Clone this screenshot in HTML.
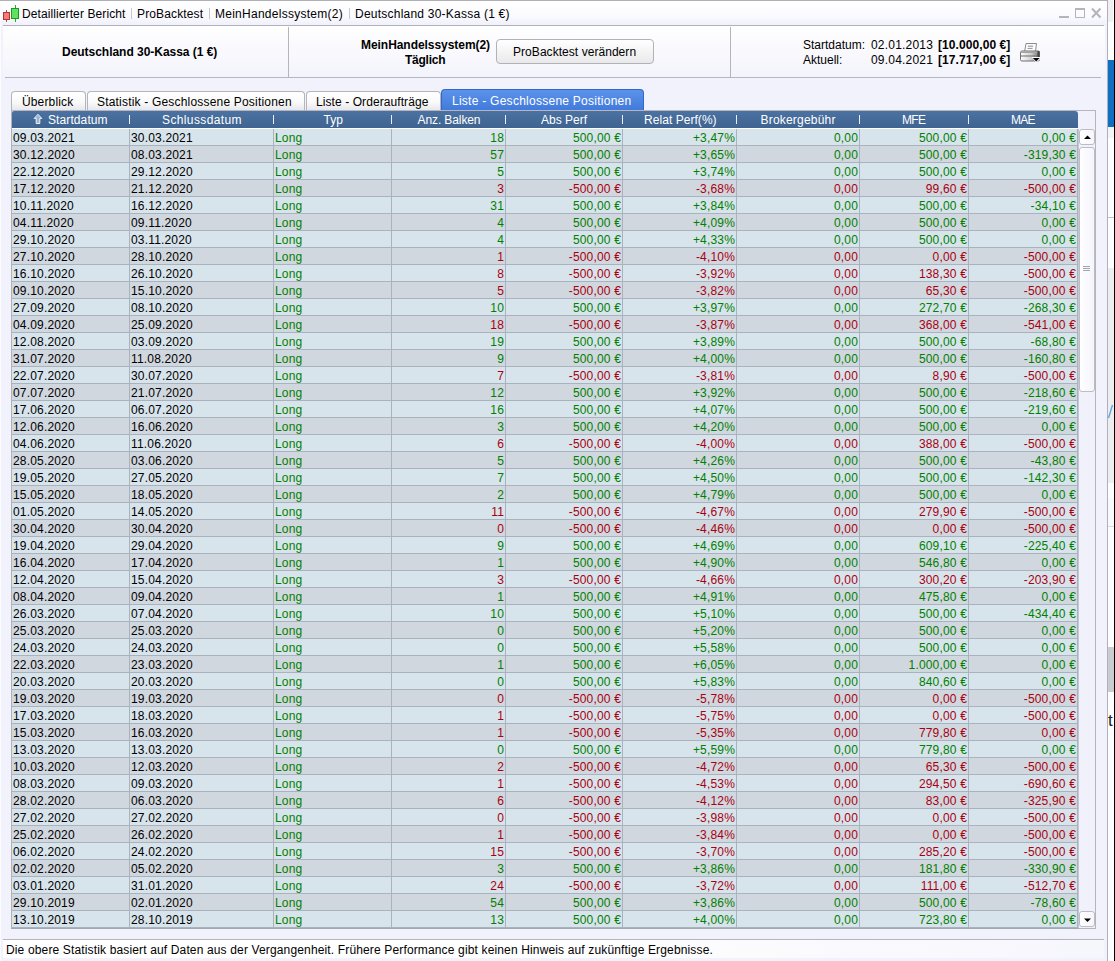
<!DOCTYPE html>
<html><head><meta charset="utf-8"><title>Detaillierter Bericht</title>
<style>
html,body{margin:0;padding:0}
body{width:1115px;height:961px;overflow:hidden;background:#fff;position:relative;font-family:"Liberation Sans",sans-serif;font-size:12px;color:#000}
div,span,i,b{position:absolute;white-space:nowrap;font-style:normal}
#win{left:0;top:0;width:1107px;height:961px;background:#f2f2fc}
#wtop{left:0;top:0;width:1108px;height:1px;background:#b0b0b8}
#wl{left:0;top:1px;width:1px;height:960px;background:#fcfcff}
#wr{left:1107px;top:0;width:1px;height:961px;background:#b0b0bc}
#tbar{left:1px;top:1px;width:1106px;height:24px;background:linear-gradient(#ffffff 0%,#fbfbff 60%,#f0f0fb 100%)}
#tline{left:3px;top:25px;width:1101px;height:1px;background:#b2b2ba}
#panel{left:3px;top:26px;width:1102px;height:51px;background:linear-gradient(#ffffff,#f3f3fc)}
#pline{left:5px;top:77px;width:1096px;height:1px;background:#b6b6be}
.vd{top:27px;width:1px;height:51px;background:#b4b4bc}
.t{font-size:12px;line-height:14px;height:14px}
.bd{font-weight:bold}
.sep{top:8px;width:1px;height:11px;background:#c8c8d0}
/* button */
#btn{left:496px;top:39px;width:156px;height:23px;border:1px solid #b2b2b6;border-radius:4px;background:linear-gradient(#ffffff,#f4f4f4 50%,#e9e9eb)}
/* tabs */
.tab{top:91px;height:19px;border:1px solid #b4b4bc;border-bottom:none;border-radius:4px 4px 0 0;background:linear-gradient(#ffffff,#fafafa 55%,#e8e8ec);box-sizing:border-box}
.tab.on{top:89px;height:22px;border-color:#3267cd;background:linear-gradient(#5b92ea,#4079da);color:#fff}
/* table */
#hdr{left:12px;top:111px;width:1066px;height:17px;background:linear-gradient(#4a72a2 0px,#456a98 9px,#3f6492 17px);border-radius:2px 3px 0 0}
#hline{left:11px;top:110px;width:1085px;height:1px;background:#b8b6bc}
#hdr span{top:2px;color:#fff;font-size:12px;line-height:14px}
#hdr b{top:4px;width:1px;height:9px;background:#e8eef4}
#corner{left:1078px;top:110px;width:18px;height:819px;border:1px solid #b4b4bc;border-left:none;box-sizing:border-box;background:#f1f1fb}
#tbl{left:0;top:0}
#tblbg{left:11px;top:128px;width:1067px;height:801px;background:#a9b3bd}
#tblr2{left:1078px;top:129px;width:1px;height:799px;background:#c4c8d0}
#tblb2{left:11px;top:928px;width:1068px;height:1px;background:#a2a8b0}
#tbll{left:11px;top:111px;width:1px;height:817px;background:#b0b1bb}
#tblw{left:12px;top:128px;width:1066px;height:1px;background:#fff}
.r{left:12px;width:1065px;height:16px;font-size:12px;line-height:16px}
.r.a{background:#d8e4ec}
.r.b{background:#d1d7de}
.r i{top:2px;height:15px;line-height:14px;letter-spacing:0.17px}
.r i.c1{left:1px}
.r i.c2{left:119px}
.r i.c3{left:263px;color:#008000}
.r i.c4{right:573px}
.r i.c5{right:456px}
.r i.c6{right:342px}
.r i.c7{right:219px}
.r i.c8{right:110px}
.r i.c9{right:1px}
.r.g i.c4,.r.g i.c5,.r.g i.c6,.r.g i.c7,.r.g i.c8,.r.g i.c9{color:#008000}
.r.n i.c4,.r.n i.c5,.r.n i.c6,.r.n i.c7,.r.n i.c8,.r.n i.c9{color:#a80010}
.vl{top:129px;width:1px;height:799px;background:#a9b3bd}
/* scrollbar */
.sbtn{left:1079px;width:16px;height:16px;border:1px solid #bcbcc4;border-radius:3px;background:linear-gradient(90deg,#ffffff,#f6f6fc);box-sizing:border-box}
#thumb{left:1079px;top:147px;width:16px;height:245px;border:1px solid #bcbcc4;border-radius:3px;background:linear-gradient(90deg,#ffffff,#f4f4fc);box-sizing:border-box}
#thumb u{position:absolute;left:3px;width:7px;height:1px;background:#a4a4ac}
/* footer */
#fline{left:3px;top:939px;width:1101px;height:1px;background:#b4b4bc}
#fbar{left:3px;top:940px;width:1101px;height:18px;background:linear-gradient(100deg,#ffffff 0%,#ffffff 45%,#f6f6fd 100%)}

</style></head>
<body>
<div id="win"></div>
<div id="tbar"></div>
<div id="wtop"></div><div id="wl"></div><div id="wr"></div>
<div id="tline"></div>
<div id="panel"></div>
<div id="pline"></div>
<div class="vd" style="left:288px"></div>
<div class="vd" style="left:730px"></div>
<!-- outside strip -->
<div style="left:1108px;top:0;width:5px;height:22px;background:#f0f0f0"></div>
<div style="left:1108px;top:60px;width:6px;height:67px;background:#0f70c2"></div>
<div style="left:1108px;top:127px;width:6px;height:11px;background:#f4f4f4"></div>
<div style="left:1108px;top:217px;width:6px;height:1px;background:#c0c4c8"></div>
<div style="left:1108px;top:268px;width:6px;height:215px;background:#eeeeee"></div>
<div style="left:1108px;top:498px;width:6px;height:28px;background:#fafafa"></div>
<div style="left:1108px;top:526px;width:6px;height:1px;background:#dcdcdc"></div>
<div style="left:1108px;top:647px;width:6px;height:45px;background:#c9cdd0"></div>
<svg style="position:absolute;left:1108px;top:404px" width="6" height="15"><path d="M0.5 14 L4.5 1" stroke="#5aa8e8" stroke-width="1.4" fill="none"/></svg>
<div style="left:1108px;top:711px;font-size:17px;line-height:20px;color:#222">t</div>
<div style="left:1114px;top:0;width:1px;height:961px;background:#000"></div>
<!-- title bar -->
<svg style="position:absolute;left:0;top:0" width="24" height="25" shape-rendering="crispEdges">
<rect x="6" y="10" width="1" height="12" fill="#c04848"/>
<rect x="3" y="12" width="7" height="8" fill="#b83030"/>
<rect x="4" y="13" width="5" height="6" fill="#f27c7c"/>
<rect x="15" y="5" width="1" height="17" fill="#28a828"/>
<rect x="11" y="8" width="8" height="11" fill="#1c9c1c"/>
<rect x="12" y="9" width="6" height="9" fill="#62e062"/>
</svg>
<span class="t" id="t1" style="left:22px;top:7px;letter-spacing:0.1px">Detaillierter Bericht</span>
<div class="sep" style="left:131px"></div>
<span class="t" id="t2" style="left:137px;top:7px;letter-spacing:0.14px">ProBacktest</span>
<div class="sep" style="left:209px"></div>
<span class="t" id="t3" style="left:215px;top:7px;letter-spacing:0.26px">MeinHandelssystem(2)</span>
<div class="sep" style="left:349px"></div>
<span class="t" id="t4" style="left:355px;top:7px;letter-spacing:0.23px">Deutschland 30-Kassa (1 €)</span>
<svg style="position:absolute;left:1056px;top:5px" width="48" height="16">
<rect x="3" y="11" width="10" height="2" fill="#b4b4bc"/>
<rect x="19.5" y="3.5" width="9" height="9" fill="none" stroke="#b4b4bc" stroke-width="1"/>
<rect x="19" y="3" width="10" height="2" fill="#b4b4bc"/>
<path d="M36 3.5 L44.5 12.5 M44.5 3.5 L36 12.5" stroke="#b4b4bc" stroke-width="2" fill="none"/>
</svg>
<!-- panel -->
<span class="t bd" id="p1" style="left:62px;top:45px;letter-spacing:-0.03px">Deutschland 30-Kassa (1 €)</span>
<span class="t bd" id="p2" style="left:361px;top:38px;letter-spacing:-0.05px">MeinHandelssystem(2)</span>
<span class="t bd" id="p3" style="left:405px;top:53px;letter-spacing:-0.25px">Täglich</span>
<div id="btn"></div>
<span class="t" id="p4" style="left:513px;top:45px;letter-spacing:0.05px">ProBacktest verändern</span>
<span class="t" id="p5" style="left:803px;top:38px">Startdatum:</span>
<span class="t" id="p6" style="left:871px;top:38px;letter-spacing:0.2px">02.01.2013</span>
<span class="t bd" id="p7" style="left:938px;top:38px;letter-spacing:0.08px">[10.000,00 €]</span>
<span class="t" id="p8" style="left:803px;top:53px">Aktuell:</span>
<span class="t" id="p9" style="left:871px;top:53px;letter-spacing:0.2px">09.04.2021</span>
<span class="t bd" id="p10" style="left:938px;top:53px;letter-spacing:0.08px">[17.717,00 €]</span>
<svg style="position:absolute;left:1019px;top:42px" width="23" height="21">
<defs><linearGradient id="pg" x1="0" x2="1" y1="0" y2="0"><stop offset="0" stop-color="#ffffff"/><stop offset="0.55" stop-color="#d0d0d0"/><stop offset="1" stop-color="#707070"/></linearGradient></defs>
<path d="M5.6 9.5 L7 1.5 L17.5 1.5 L16.5 9.5 Z" fill="#fafafa" stroke="#8c8c8c" stroke-width="1"/>
<rect x="9" y="3.5" width="5" height="1.6" fill="#b0b0b0"/><rect x="8.5" y="6" width="5" height="1" fill="#a0a0a0"/>
<rect x="1.5" y="9" width="19" height="10" rx="1.5" fill="url(#pg)" stroke="#707070" stroke-width="1"/>
<rect x="2" y="9.5" width="18" height="1.5" fill="#a4a4a4"/>
<rect x="2" y="13.5" width="17.5" height="1" fill="#6c6c6c"/>
<rect x="18.5" y="9" width="2" height="6" fill="#444"/>
<path d="M12.5 15 L21.5 15 L21.5 17 L17 20.5 Z" fill="#fff"/>
<path d="M13.8 16 L20.6 16 L17.2 19.4 Z" fill="#000"/>
</svg>
<!-- tabs -->
<div class="tab" style="left:11px;width:75px"></div>
<div class="tab" style="left:87px;width:218px"></div>
<div class="tab" style="left:306px;width:135px"></div>
<div class="tab on" style="left:441px;width:203px"></div>
<span class="t" id="b1" style="left:22px;top:95px;letter-spacing:0.14px">Überblick</span>
<span class="t" id="b2" style="left:97px;top:95px;letter-spacing:0.19px">Statistik - Geschlossene Positionen</span>
<span class="t" id="b3" style="left:316px;top:95px;letter-spacing:0.08px">Liste - Orderaufträge</span>
<span class="t" id="b4" style="left:452px;top:94px;letter-spacing:0.26px;color:#fff">Liste - Geschlossene Positionen</span>
<!-- table header -->
<div id="corner"></div>
<div id="tblbg"></div><div id="tblb2"></div><div id="tblr2"></div>
<div id="hline"></div>
<div id="hdr">
<svg style="position:absolute;left:21px;top:2px" width="11" height="12"><path d="M5 1.3 L8.8 5.4 L6.8 5.4 L6.8 10.5 L3.2 10.5 L3.2 5.4 L1.2 5.4 Z" fill="#9cb4d0" stroke="#eef3f8" stroke-width="1" stroke-linejoin="miter"/></svg>
<span id="h1" style="left:36px;letter-spacing:0.1px">Startdatum</span>
<b style="left:117px"></b>
<span id="h2" style="left:150px;letter-spacing:0.38px">Schlussdatum</span>
<b style="left:261px"></b>
<span id="h3" style="left:311.5px;letter-spacing:0.1px">Typ</span>
<b style="left:379px"></b>
<span id="h4" style="left:405.5px;letter-spacing:-0.1px">Anz. Balken</span>
<b style="left:493px"></b>
<span id="h5" style="left:529px;letter-spacing:0px">Abs Perf</span>
<b style="left:610px"></b>
<span id="h6" style="left:632px;letter-spacing:0.05px">Relat Perf(%)</span>
<b style="left:724px"></b>
<span id="h7" style="left:748.5px;letter-spacing:0.2px">Brokergebühr</span>
<b style="left:847px"></b>
<span id="h8" style="left:890px;letter-spacing:-0.7px">MFE</span>
<b style="left:956px"></b>
<span id="h9" style="left:999px;letter-spacing:-0.7px">MAE</span>
</div>
<div id="tblw"></div><div id="tbll"></div>
<div id="tbl">
<div class="r a g" style="top:129px"><i class="c1">09.03.2021</i><i class="c2">30.03.2021</i><i class="c3">Long</i><i class="c4">18</i><i class="c5">500,00 €</i><i class="c6">+3,47%</i><i class="c7">0,00</i><i class="c8">500,00 €</i><i class="c9">0,00 €</i></div>
<div class="r b g" style="top:146px"><i class="c1">30.12.2020</i><i class="c2">08.03.2021</i><i class="c3">Long</i><i class="c4">57</i><i class="c5">500,00 €</i><i class="c6">+3,65%</i><i class="c7">0,00</i><i class="c8">500,00 €</i><i class="c9">-319,30 €</i></div>
<div class="r a g" style="top:163px"><i class="c1">22.12.2020</i><i class="c2">29.12.2020</i><i class="c3">Long</i><i class="c4">5</i><i class="c5">500,00 €</i><i class="c6">+3,74%</i><i class="c7">0,00</i><i class="c8">500,00 €</i><i class="c9">0,00 €</i></div>
<div class="r b n" style="top:180px"><i class="c1">17.12.2020</i><i class="c2">21.12.2020</i><i class="c3">Long</i><i class="c4">3</i><i class="c5">-500,00 €</i><i class="c6">-3,68%</i><i class="c7">0,00</i><i class="c8">99,60 €</i><i class="c9">-500,00 €</i></div>
<div class="r a g" style="top:197px"><i class="c1">10.11.2020</i><i class="c2">16.12.2020</i><i class="c3">Long</i><i class="c4">31</i><i class="c5">500,00 €</i><i class="c6">+3,84%</i><i class="c7">0,00</i><i class="c8">500,00 €</i><i class="c9">-34,10 €</i></div>
<div class="r b g" style="top:214px"><i class="c1">04.11.2020</i><i class="c2">09.11.2020</i><i class="c3">Long</i><i class="c4">4</i><i class="c5">500,00 €</i><i class="c6">+4,09%</i><i class="c7">0,00</i><i class="c8">500,00 €</i><i class="c9">0,00 €</i></div>
<div class="r a g" style="top:231px"><i class="c1">29.10.2020</i><i class="c2">03.11.2020</i><i class="c3">Long</i><i class="c4">4</i><i class="c5">500,00 €</i><i class="c6">+4,33%</i><i class="c7">0,00</i><i class="c8">500,00 €</i><i class="c9">0,00 €</i></div>
<div class="r b n" style="top:248px"><i class="c1">27.10.2020</i><i class="c2">28.10.2020</i><i class="c3">Long</i><i class="c4">1</i><i class="c5">-500,00 €</i><i class="c6">-4,10%</i><i class="c7">0,00</i><i class="c8">0,00 €</i><i class="c9">-500,00 €</i></div>
<div class="r a n" style="top:265px"><i class="c1">16.10.2020</i><i class="c2">26.10.2020</i><i class="c3">Long</i><i class="c4">8</i><i class="c5">-500,00 €</i><i class="c6">-3,92%</i><i class="c7">0,00</i><i class="c8">138,30 €</i><i class="c9">-500,00 €</i></div>
<div class="r b n" style="top:282px"><i class="c1">09.10.2020</i><i class="c2">15.10.2020</i><i class="c3">Long</i><i class="c4">5</i><i class="c5">-500,00 €</i><i class="c6">-3,82%</i><i class="c7">0,00</i><i class="c8">65,30 €</i><i class="c9">-500,00 €</i></div>
<div class="r a g" style="top:299px"><i class="c1">27.09.2020</i><i class="c2">08.10.2020</i><i class="c3">Long</i><i class="c4">10</i><i class="c5">500,00 €</i><i class="c6">+3,97%</i><i class="c7">0,00</i><i class="c8">272,70 €</i><i class="c9">-268,30 €</i></div>
<div class="r b n" style="top:316px"><i class="c1">04.09.2020</i><i class="c2">25.09.2020</i><i class="c3">Long</i><i class="c4">18</i><i class="c5">-500,00 €</i><i class="c6">-3,87%</i><i class="c7">0,00</i><i class="c8">368,00 €</i><i class="c9">-541,00 €</i></div>
<div class="r a g" style="top:333px"><i class="c1">12.08.2020</i><i class="c2">03.09.2020</i><i class="c3">Long</i><i class="c4">19</i><i class="c5">500,00 €</i><i class="c6">+3,89%</i><i class="c7">0,00</i><i class="c8">500,00 €</i><i class="c9">-68,80 €</i></div>
<div class="r b g" style="top:350px"><i class="c1">31.07.2020</i><i class="c2">11.08.2020</i><i class="c3">Long</i><i class="c4">9</i><i class="c5">500,00 €</i><i class="c6">+4,00%</i><i class="c7">0,00</i><i class="c8">500,00 €</i><i class="c9">-160,80 €</i></div>
<div class="r a n" style="top:367px"><i class="c1">22.07.2020</i><i class="c2">30.07.2020</i><i class="c3">Long</i><i class="c4">7</i><i class="c5">-500,00 €</i><i class="c6">-3,81%</i><i class="c7">0,00</i><i class="c8">8,90 €</i><i class="c9">-500,00 €</i></div>
<div class="r b g" style="top:384px"><i class="c1">07.07.2020</i><i class="c2">21.07.2020</i><i class="c3">Long</i><i class="c4">12</i><i class="c5">500,00 €</i><i class="c6">+3,92%</i><i class="c7">0,00</i><i class="c8">500,00 €</i><i class="c9">-218,60 €</i></div>
<div class="r a g" style="top:401px"><i class="c1">17.06.2020</i><i class="c2">06.07.2020</i><i class="c3">Long</i><i class="c4">16</i><i class="c5">500,00 €</i><i class="c6">+4,07%</i><i class="c7">0,00</i><i class="c8">500,00 €</i><i class="c9">-219,60 €</i></div>
<div class="r b g" style="top:418px"><i class="c1">12.06.2020</i><i class="c2">16.06.2020</i><i class="c3">Long</i><i class="c4">3</i><i class="c5">500,00 €</i><i class="c6">+4,20%</i><i class="c7">0,00</i><i class="c8">500,00 €</i><i class="c9">0,00 €</i></div>
<div class="r a n" style="top:435px"><i class="c1">04.06.2020</i><i class="c2">11.06.2020</i><i class="c3">Long</i><i class="c4">6</i><i class="c5">-500,00 €</i><i class="c6">-4,00%</i><i class="c7">0,00</i><i class="c8">388,00 €</i><i class="c9">-500,00 €</i></div>
<div class="r b g" style="top:452px"><i class="c1">28.05.2020</i><i class="c2">03.06.2020</i><i class="c3">Long</i><i class="c4">5</i><i class="c5">500,00 €</i><i class="c6">+4,26%</i><i class="c7">0,00</i><i class="c8">500,00 €</i><i class="c9">-43,80 €</i></div>
<div class="r a g" style="top:469px"><i class="c1">19.05.2020</i><i class="c2">27.05.2020</i><i class="c3">Long</i><i class="c4">7</i><i class="c5">500,00 €</i><i class="c6">+4,50%</i><i class="c7">0,00</i><i class="c8">500,00 €</i><i class="c9">-142,30 €</i></div>
<div class="r b g" style="top:486px"><i class="c1">15.05.2020</i><i class="c2">18.05.2020</i><i class="c3">Long</i><i class="c4">2</i><i class="c5">500,00 €</i><i class="c6">+4,79%</i><i class="c7">0,00</i><i class="c8">500,00 €</i><i class="c9">0,00 €</i></div>
<div class="r a n" style="top:503px"><i class="c1">01.05.2020</i><i class="c2">14.05.2020</i><i class="c3">Long</i><i class="c4">11</i><i class="c5">-500,00 €</i><i class="c6">-4,67%</i><i class="c7">0,00</i><i class="c8">279,90 €</i><i class="c9">-500,00 €</i></div>
<div class="r b n" style="top:520px"><i class="c1">30.04.2020</i><i class="c2">30.04.2020</i><i class="c3">Long</i><i class="c4">0</i><i class="c5">-500,00 €</i><i class="c6">-4,46%</i><i class="c7">0,00</i><i class="c8">0,00 €</i><i class="c9">-500,00 €</i></div>
<div class="r a g" style="top:537px"><i class="c1">19.04.2020</i><i class="c2">29.04.2020</i><i class="c3">Long</i><i class="c4">9</i><i class="c5">500,00 €</i><i class="c6">+4,69%</i><i class="c7">0,00</i><i class="c8">609,10 €</i><i class="c9">-225,40 €</i></div>
<div class="r b g" style="top:554px"><i class="c1">16.04.2020</i><i class="c2">17.04.2020</i><i class="c3">Long</i><i class="c4">1</i><i class="c5">500,00 €</i><i class="c6">+4,90%</i><i class="c7">0,00</i><i class="c8">546,80 €</i><i class="c9">0,00 €</i></div>
<div class="r a n" style="top:571px"><i class="c1">12.04.2020</i><i class="c2">15.04.2020</i><i class="c3">Long</i><i class="c4">3</i><i class="c5">-500,00 €</i><i class="c6">-4,66%</i><i class="c7">0,00</i><i class="c8">300,20 €</i><i class="c9">-203,90 €</i></div>
<div class="r b g" style="top:588px"><i class="c1">08.04.2020</i><i class="c2">09.04.2020</i><i class="c3">Long</i><i class="c4">1</i><i class="c5">500,00 €</i><i class="c6">+4,91%</i><i class="c7">0,00</i><i class="c8">475,80 €</i><i class="c9">0,00 €</i></div>
<div class="r a g" style="top:605px"><i class="c1">26.03.2020</i><i class="c2">07.04.2020</i><i class="c3">Long</i><i class="c4">10</i><i class="c5">500,00 €</i><i class="c6">+5,10%</i><i class="c7">0,00</i><i class="c8">500,00 €</i><i class="c9">-434,40 €</i></div>
<div class="r b g" style="top:622px"><i class="c1">25.03.2020</i><i class="c2">25.03.2020</i><i class="c3">Long</i><i class="c4">0</i><i class="c5">500,00 €</i><i class="c6">+5,20%</i><i class="c7">0,00</i><i class="c8">500,00 €</i><i class="c9">0,00 €</i></div>
<div class="r a g" style="top:639px"><i class="c1">24.03.2020</i><i class="c2">24.03.2020</i><i class="c3">Long</i><i class="c4">0</i><i class="c5">500,00 €</i><i class="c6">+5,58%</i><i class="c7">0,00</i><i class="c8">500,00 €</i><i class="c9">0,00 €</i></div>
<div class="r b g" style="top:656px"><i class="c1">22.03.2020</i><i class="c2">23.03.2020</i><i class="c3">Long</i><i class="c4">1</i><i class="c5">500,00 €</i><i class="c6">+6,05%</i><i class="c7">0,00</i><i class="c8">1.000,00 €</i><i class="c9">0,00 €</i></div>
<div class="r a g" style="top:673px"><i class="c1">20.03.2020</i><i class="c2">20.03.2020</i><i class="c3">Long</i><i class="c4">0</i><i class="c5">500,00 €</i><i class="c6">+5,83%</i><i class="c7">0,00</i><i class="c8">840,60 €</i><i class="c9">0,00 €</i></div>
<div class="r b n" style="top:690px"><i class="c1">19.03.2020</i><i class="c2">19.03.2020</i><i class="c3">Long</i><i class="c4">0</i><i class="c5">-500,00 €</i><i class="c6">-5,78%</i><i class="c7">0,00</i><i class="c8">0,00 €</i><i class="c9">-500,00 €</i></div>
<div class="r a n" style="top:707px"><i class="c1">17.03.2020</i><i class="c2">18.03.2020</i><i class="c3">Long</i><i class="c4">1</i><i class="c5">-500,00 €</i><i class="c6">-5,75%</i><i class="c7">0,00</i><i class="c8">0,00 €</i><i class="c9">-500,00 €</i></div>
<div class="r b n" style="top:724px"><i class="c1">15.03.2020</i><i class="c2">16.03.2020</i><i class="c3">Long</i><i class="c4">1</i><i class="c5">-500,00 €</i><i class="c6">-5,35%</i><i class="c7">0,00</i><i class="c8">779,80 €</i><i class="c9">0,00 €</i></div>
<div class="r a g" style="top:741px"><i class="c1">13.03.2020</i><i class="c2">13.03.2020</i><i class="c3">Long</i><i class="c4">0</i><i class="c5">500,00 €</i><i class="c6">+5,59%</i><i class="c7">0,00</i><i class="c8">779,80 €</i><i class="c9">0,00 €</i></div>
<div class="r b n" style="top:758px"><i class="c1">10.03.2020</i><i class="c2">12.03.2020</i><i class="c3">Long</i><i class="c4">2</i><i class="c5">-500,00 €</i><i class="c6">-4,72%</i><i class="c7">0,00</i><i class="c8">65,30 €</i><i class="c9">-500,00 €</i></div>
<div class="r a n" style="top:775px"><i class="c1">08.03.2020</i><i class="c2">09.03.2020</i><i class="c3">Long</i><i class="c4">1</i><i class="c5">-500,00 €</i><i class="c6">-4,53%</i><i class="c7">0,00</i><i class="c8">294,50 €</i><i class="c9">-690,60 €</i></div>
<div class="r b n" style="top:792px"><i class="c1">28.02.2020</i><i class="c2">06.03.2020</i><i class="c3">Long</i><i class="c4">6</i><i class="c5">-500,00 €</i><i class="c6">-4,12%</i><i class="c7">0,00</i><i class="c8">83,00 €</i><i class="c9">-325,90 €</i></div>
<div class="r a n" style="top:809px"><i class="c1">27.02.2020</i><i class="c2">27.02.2020</i><i class="c3">Long</i><i class="c4">0</i><i class="c5">-500,00 €</i><i class="c6">-3,98%</i><i class="c7">0,00</i><i class="c8">0,00 €</i><i class="c9">-500,00 €</i></div>
<div class="r b n" style="top:826px"><i class="c1">25.02.2020</i><i class="c2">26.02.2020</i><i class="c3">Long</i><i class="c4">1</i><i class="c5">-500,00 €</i><i class="c6">-3,84%</i><i class="c7">0,00</i><i class="c8">0,00 €</i><i class="c9">-500,00 €</i></div>
<div class="r a n" style="top:843px"><i class="c1">06.02.2020</i><i class="c2">24.02.2020</i><i class="c3">Long</i><i class="c4">15</i><i class="c5">-500,00 €</i><i class="c6">-3,70%</i><i class="c7">0,00</i><i class="c8">285,20 €</i><i class="c9">-500,00 €</i></div>
<div class="r b g" style="top:860px"><i class="c1">02.02.2020</i><i class="c2">05.02.2020</i><i class="c3">Long</i><i class="c4">3</i><i class="c5">500,00 €</i><i class="c6">+3,86%</i><i class="c7">0,00</i><i class="c8">181,80 €</i><i class="c9">-330,90 €</i></div>
<div class="r a n" style="top:877px"><i class="c1">03.01.2020</i><i class="c2">31.01.2020</i><i class="c3">Long</i><i class="c4">24</i><i class="c5">-500,00 €</i><i class="c6">-3,72%</i><i class="c7">0,00</i><i class="c8">111,00 €</i><i class="c9">-512,70 €</i></div>
<div class="r b g" style="top:894px"><i class="c1">29.10.2019</i><i class="c2">02.01.2020</i><i class="c3">Long</i><i class="c4">54</i><i class="c5">500,00 €</i><i class="c6">+3,86%</i><i class="c7">0,00</i><i class="c8">500,00 €</i><i class="c9">-78,60 €</i></div>
<div class="r a g" style="top:911px"><i class="c1">13.10.2019</i><i class="c2">28.10.2019</i><i class="c3">Long</i><i class="c4">13</i><i class="c5">500,00 €</i><i class="c6">+4,00%</i><i class="c7">0,00</i><i class="c8">723,80 €</i><i class="c9">0,00 €</i></div>
</div>
<div class="vl" style="left:129px"></div>
<div class="vl" style="left:273px"></div>
<div class="vl" style="left:391px"></div>
<div class="vl" style="left:505px"></div>
<div class="vl" style="left:622px"></div>
<div class="vl" style="left:736px"></div>
<div class="vl" style="left:859px"></div>
<div class="vl" style="left:968px"></div>
<!-- scrollbar -->
<div class="sbtn" style="top:129px"><svg style="position:absolute;left:3.5px;top:5px" width="8" height="5"><path d="M0 4 L7 4 L3.5 0.5 Z" fill="#000"/></svg></div>
<div id="thumb"><u style="top:118px"></u><u style="top:120px"></u><u style="top:122px"></u></div>
<div class="sbtn" style="top:911px"><svg style="position:absolute;left:3.5px;top:6px" width="8" height="5"><path d="M0 0.5 L7 0.5 L3.5 4 Z" fill="#000"/></svg></div>
<!-- footer -->
<div id="fline"></div>
<div id="fbar"></div>
<span class="t" id="f1" style="left:6px;top:943px;letter-spacing:0.146px">Die obere Statistik basiert auf Daten aus der Vergangenheit. Frühere Performance gibt keinen Hinweis auf zukünftige Ergebnisse.</span>
</body></html>
